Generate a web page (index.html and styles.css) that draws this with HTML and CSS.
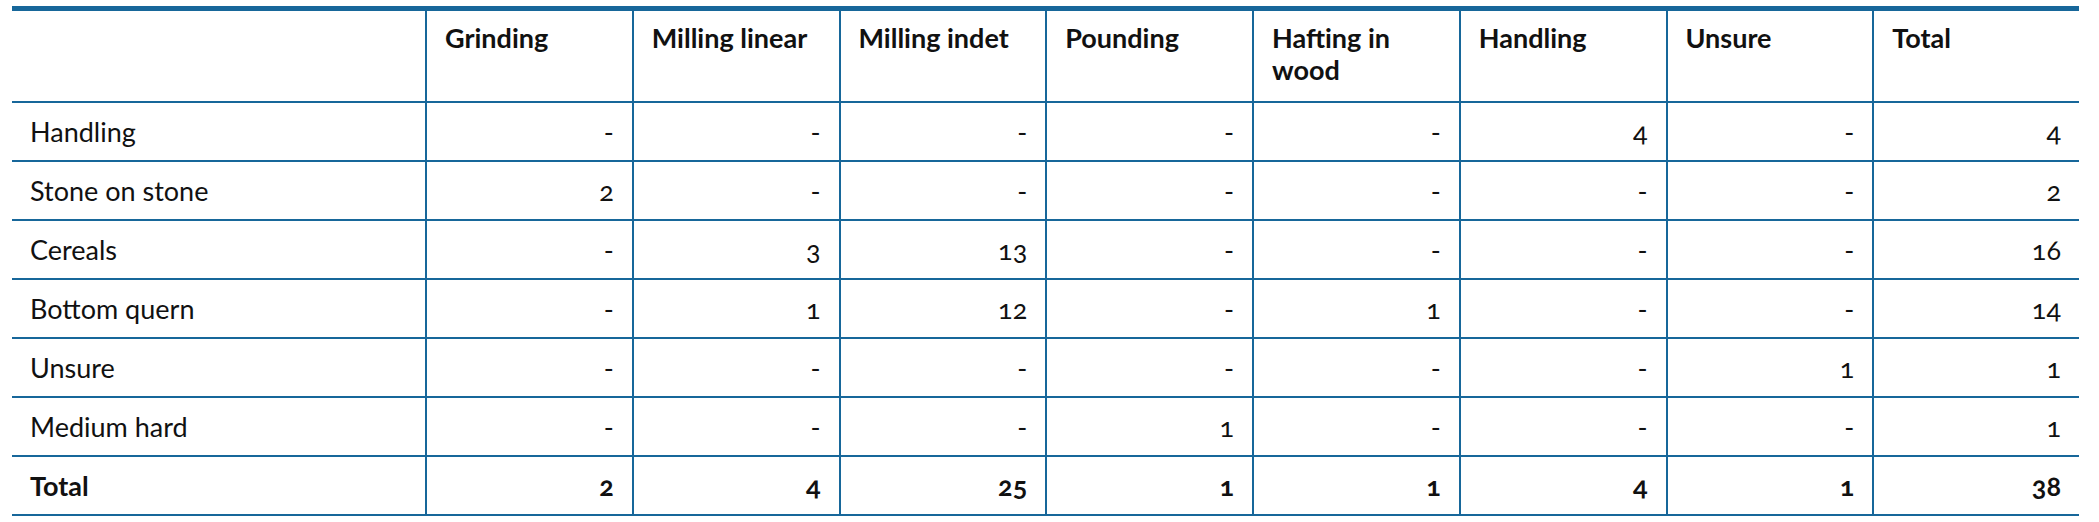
FILE: index.html
```html
<!DOCTYPE html>
<html lang="en">
<head>
<meta charset="utf-8">
<title>Use-wear table</title>
<link rel="stylesheet" href="styles.css">
</head>
<body>
<table class="data">
  <colgroup>
    <col class="c-label">
    <col class="c-num"><col class="c-num"><col class="c-num"><col class="c-num">
    <col class="c-num"><col class="c-num"><col class="c-num"><col class="c-num">
  </colgroup>
  <thead>
    <tr>
      <th></th>
      <th>Grinding</th>
      <th>Milling linear</th>
      <th>Milling indet</th>
      <th>Pounding</th>
      <th>Hafting in wood</th>
      <th>Handling</th>
      <th>Unsure</th>
      <th>Total</th>
    </tr>
  </thead>
  <tbody>
    <tr><td>Handling</td><td>-</td><td>-</td><td>-</td><td>-</td><td>-</td><td>4</td><td>-</td><td>4</td></tr>
    <tr><td>Stone on stone</td><td>2</td><td>-</td><td>-</td><td>-</td><td>-</td><td>-</td><td>-</td><td>2</td></tr>
    <tr><td>Cereals</td><td>-</td><td>3</td><td>13</td><td>-</td><td>-</td><td>-</td><td>-</td><td>16</td></tr>
    <tr><td>Bottom quern</td><td>-</td><td>1</td><td>12</td><td>-</td><td>1</td><td>-</td><td>-</td><td>14</td></tr>
    <tr><td>Unsure</td><td>-</td><td>-</td><td>-</td><td>-</td><td>-</td><td>-</td><td>1</td><td>1</td></tr>
    <tr><td>Medium hard</td><td>-</td><td>-</td><td>-</td><td>1</td><td>-</td><td>-</td><td>-</td><td>1</td></tr>
    <tr class="total"><td>Total</td><td>2</td><td>4</td><td>25</td><td>1</td><td>1</td><td>4</td><td>1</td><td>38</td></tr>
  </tbody>
</table>
</body>
</html>
```

FILE: styles.css
```css
html, body {
  background: #ffffff;
}

body {
  margin: 6px 20px 0 12px;
  font-family: "Lato", "Open Sans", sans-serif;
  font-size: 27px;
  color: #111111;
  font-variant-numeric: oldstyle-nums;
}

.data {
  width: 2067px;
  table-layout: fixed;
  border-collapse: separate;
  border-spacing: 0;
}

.c-label {
  width: 413px;
}

.c-num {
  width: 206.75px;
}

.data th,
.data td {
  box-sizing: border-box;
  border-bottom: 2px solid #17679a;
  padding: 0 18px;
}

.data th + th,
.data td + td {
  border-left: 2px solid #17679a;
}

.data th {
  border-top: 5px solid #17679a;
  height: 97px;
  padding-top: 11px;
  padding-bottom: 15px;
  font-weight: 700;
  text-align: left;
  vertical-align: top;
  line-height: 32px;
}

.data td {
  height: 59px;
  line-height: 32px;
  font-weight: 400;
  text-align: right;
  vertical-align: middle;
}

.data td:first-child {
  text-align: left;
}

.data .total td {
  font-weight: 700;
}
```
